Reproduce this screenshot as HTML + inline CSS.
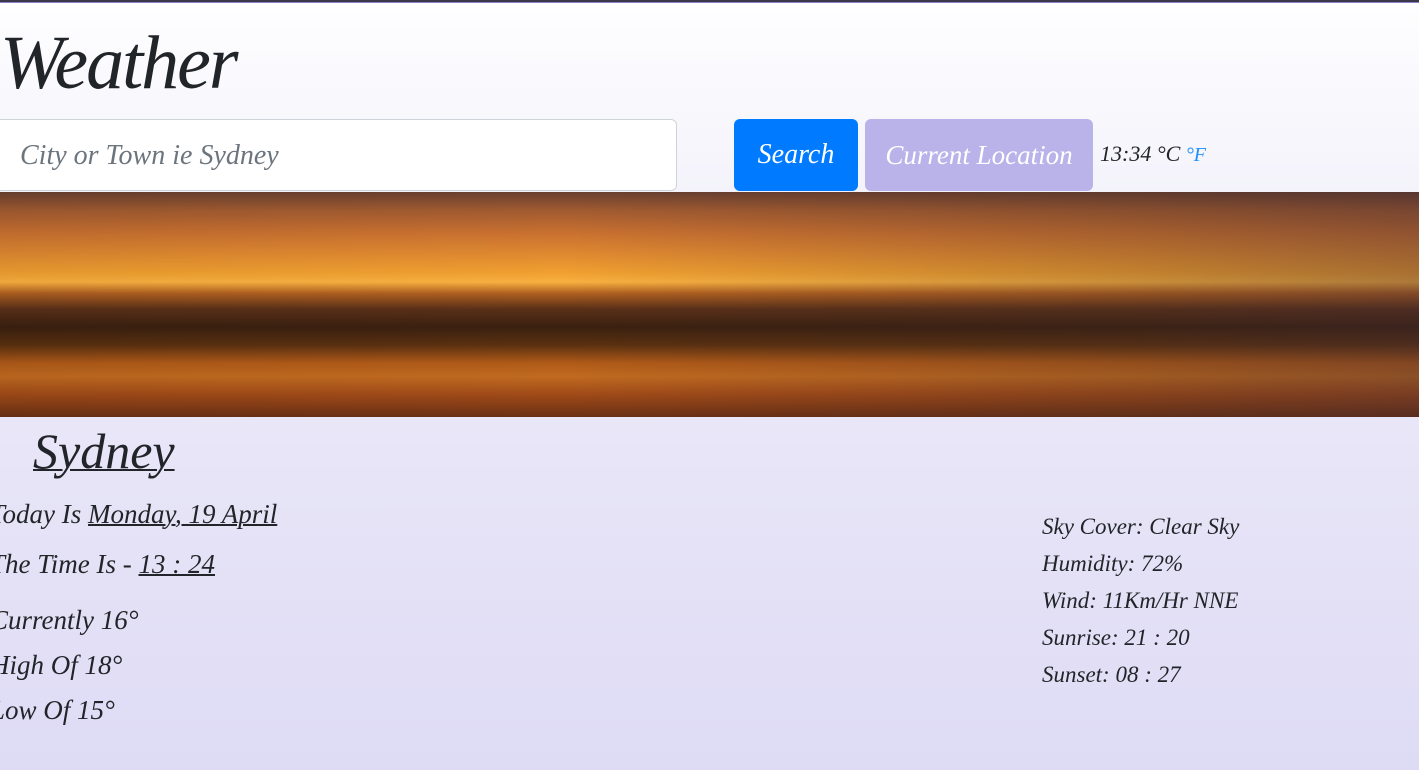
<!DOCTYPE html>
<html><head><meta charset="utf-8"><style>
*{margin:0;padding:0;box-sizing:border-box}
body{width:1419px;height:770px;overflow:hidden;font-family:"Liberation Serif",serif;font-style:italic;color:#212529;background:linear-gradient(#fefeff 0%,#f4f3fb 25%,#e9e6f8 55%,#dedbf5 100%);position:relative}
.top{position:absolute;left:0;top:0;width:100%;height:3px;background:#3a3748;border-bottom:1px solid #8a80c8}
h1{position:absolute;left:0;top:20px;font-size:76px;font-weight:normal;letter-spacing:-2px;line-height:86px}
.inp{position:absolute;left:-5px;top:119px;width:682px;height:72px;background:#fff;border:1px solid #ced4da;border-radius:6px;font-size:28px;color:#6c757d;padding:20px 24px}
.btn{position:absolute;top:119px;height:72px;border-radius:6px;color:#fff;font-size:28px;text-align:center;line-height:72px}
.b1{left:734px;width:124px;background:#007bff}
.b2{left:865px;width:228px;background:#b9b3ea;font-size:27px}
.unit{position:absolute;left:1100px;top:141px;font-size:22px}
.unit span{color:#1e90ff;font-size:20px}
.banner{position:absolute;left:0;top:192px;width:1419px;height:225px;background:
linear-gradient(180deg,#6a4030 0%,#a05a30 8%,#c87030 18%,#e08a30 28%,#f0a030 36%,#f8b040 40%,#b06020 45%,#5a3018 52%,#3a2010 60%,#5a3010 68%,#b05a18 76%,#c06a20 82%,#a04a18 90%,#6a3014 100%)}
.banner:after{content:"";position:absolute;inset:0;background:linear-gradient(90deg,rgba(0,0,0,0.05),rgba(0,0,0,0) 40%,rgba(60,40,40,0.25) 80%,rgba(60,40,50,0.4))}
.city{position:absolute;left:33px;top:422px;font-size:50px;text-decoration:underline;text-decoration-thickness:2px}
.t{position:absolute;font-size:27px;white-space:nowrap}
.t u{text-decoration-thickness:2px}
.r{position:absolute;left:1042px;font-size:23px}
</style></head><body>
<div class="top"></div>
<h1>Weather</h1>
<div class="inp">City or Town ie Sydney</div>
<div class="btn b1">Search</div>
<div class="btn b2">Current Location</div>
<div class="unit">13:34 °C <span>°F</span></div>
<div class="banner"></div>
<div class="city">Sydney</div>
<div class="t" style="left:-10px;top:499px">Today Is <u>Monday, 19 April</u></div>
<div class="t" style="left:-10px;top:549px">The Time Is - <u>13 : 24</u></div>
<div class="t" style="left:-10px;top:605px">Currently 16°</div>
<div class="t" style="left:-10px;top:650px">High Of 18°</div>
<div class="t" style="left:-10px;top:695px">Low Of 15°</div>
<div class="r" style="top:514px">Sky Cover: Clear Sky</div>
<div class="r" style="top:551px">Humidity: 72%</div>
<div class="r" style="top:588px">Wind: 11Km/Hr NNE</div>
<div class="r" style="top:625px">Sunrise: 21 : 20</div>
<div class="r" style="top:662px">Sunset: 08 : 27</div>
</body></html>
